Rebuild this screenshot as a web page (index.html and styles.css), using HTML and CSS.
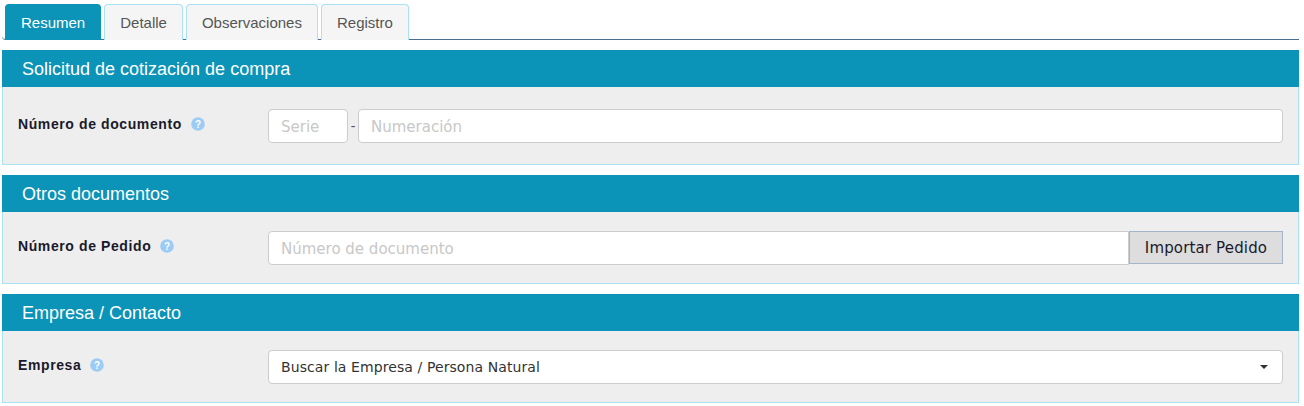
FILE: index.html
```html
<!DOCTYPE html>
<html lang="es">
<head>
<meta charset="utf-8">
<title>Solicitud de cotización de compra</title>
<link rel="stylesheet" href="styles.css">
</head>
<body>
<nav class="tabs">
  <a class="tab active">Resumen</a>
  <a class="tab">Detalle</a>
  <a class="tab">Observaciones</a>
  <a class="tab">Registro</a>
</nav>
<section class="panel">
  <h2 class="panel-title">Solicitud de cotización de compra</h2>
  <div class="panel-body">
    <div class="label"><span>Número de documento</span>
      <svg class="help" viewBox="0 0 14 14"><circle cx="7" cy="7" r="6.8" fill="#9ccbf6"/><text x="7" y="10.6" text-anchor="middle">?</text></svg>
    </div>
    <div class="control">
      <input class="input serie" placeholder="Serie">
      <span class="dash">-</span>
      <input class="input grow" placeholder="Numeración">
    </div>
  </div>
</section>
<section class="panel">
  <h2 class="panel-title">Otros documentos</h2>
  <div class="panel-body short">
    <div class="label"><span>Número de Pedido</span>
      <svg class="help" viewBox="0 0 14 14"><circle cx="7" cy="7" r="6.8" fill="#9ccbf6"/><text x="7" y="10.6" text-anchor="middle">?</text></svg>
    </div>
    <div class="control">
      <input class="input grow joined" placeholder="Número de documento">
      <button class="btn" type="button">Importar Pedido</button>
    </div>
  </div>
</section>
<section class="panel">
  <h2 class="panel-title">Empresa / Contacto</h2>
  <div class="panel-body short">
    <div class="label"><span>Empresa</span>
      <svg class="help" viewBox="0 0 14 14"><circle cx="7" cy="7" r="6.8" fill="#9ccbf6"/><text x="7" y="10.6" text-anchor="middle">?</text></svg>
    </div>
    <div class="control">
      <div class="select"><span>Buscar la Empresa / Persona Natural</span><i class="caret"></i></div>
    </div>
  </div>
</section>
</body>
</html>
```
FILE: styles.css
```css
* { box-sizing: border-box; }
html, body { margin: 0; padding: 0; background: #fff; }
body { padding: 4px 5px 0 2px; font-family: "Liberation Sans", Arial, sans-serif; color: #1a1a2a; }
.tabs {
  display: flex;
  gap: 3px;
  height: 36px;
  padding-left: 3px;
  border-bottom: 1px solid #4a6f8f;
  border-bottom-left-radius: 4px;
  margin-bottom: 10px;
}
.tab {
  display: flex;
  align-items: center;
  justify-content: center;
  height: 36px;
  padding: 0 15px;
  font-size: 15px;
  color: #555;
  background: #f5f5f5;
  border: 1px solid #a9e1f5;
  border-bottom: 0;
  border-radius: 4px 4px 0 0;
}
.tab.active { background: #0c93b8; border-color: #0c93b8; color: #fff; }
.panel { margin-bottom: 10px; }
.panel-title {
  margin: 0;
  height: 37px;
  padding-left: 20px;
  background: #0c93b8;
  color: #fff;
  font-size: 18px;
  font-weight: 400;
  line-height: 38px;
}
.panel-body {
  display: flex;
  height: 78px;
  padding: 22px 15px 0 15px;
  background: #eee;
  border: 1px solid #a9e1f5;
  border-top: 0;
}
.panel-body.short { height: 72px; padding-top: 19px; }
.label {
  display: flex;
  align-items: center;
  gap: 9px;
  flex: 0 0 250px;
  height: 30px;
  font-size: 14px;
  font-weight: 700;
  letter-spacing: 0.6px;
  color: #1a1a2a;
}
.help { width: 14px; height: 14px; }
.help text { font: 700 10px "Liberation Sans", Arial, sans-serif; fill: #fff; letter-spacing: 0; }
.control { flex: 1; display: flex; align-items: flex-start; }
.input {
  height: 34px;
  padding: 2px 12px 0;
  background: #fff;
  border: 1px solid #ccc;
  border-radius: 4px;
  font: 15px "DejaVu Sans", Verdana, sans-serif;
  outline: 0;
  min-width: 0;
}
.input::placeholder { color: #c8c8c8; opacity: 1; }
.serie { width: 80px; }
.grow { flex: 1; }
.dash { width: 10px; text-align: center; line-height: 35px; font-size: 14px; color: #555; }
.joined { border-radius: 4px 0 0 4px; }
.btn {
  width: 154px;
  height: 33px;
  padding: 0;
  background: #ddd;
  border: 1px solid #a5b5c9;
  font: 15px "DejaVu Sans", Verdana, sans-serif;
  letter-spacing: 0.15px;
  color: #1a1a2a;
}
.select {
  flex: 1;
  display: flex;
  align-items: center;
  justify-content: space-between;
  height: 34px;
  padding: 0 12px;
  background: #fff;
  border: 1px solid #ccc;
  border-radius: 4px;
  font: 14px "DejaVu Sans", Verdana, sans-serif;
  letter-spacing: 0.09px;
  color: #333;
}
.caret { width: 0; height: 0; border: 4px solid transparent; border-top-color: #333; border-bottom: 0; margin-right: 2px; }
```
